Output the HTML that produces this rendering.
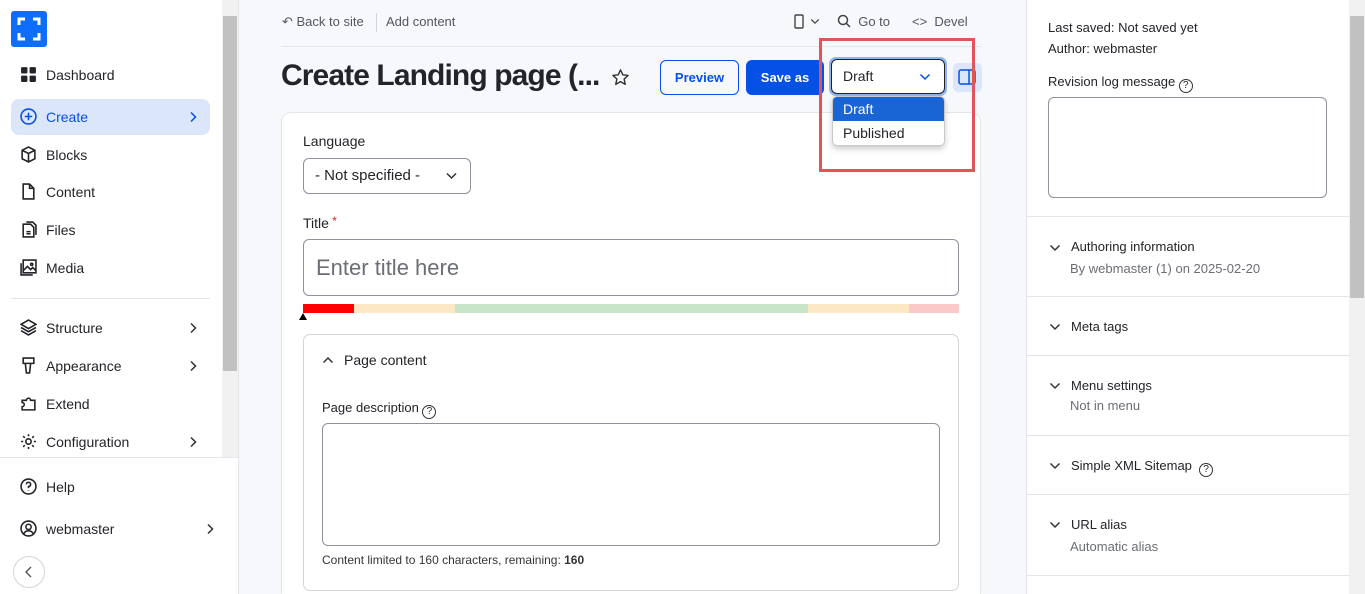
<!DOCTYPE html>
<html><head><meta charset="utf-8"><style>
*{box-sizing:border-box;margin:0;padding:0}
html{width:1365px;height:594px;overflow:hidden}
body{width:1365px;height:594px;overflow:hidden;font-family:"Liberation Sans",sans-serif;color:#232429;background:#f7f8fb;position:relative;font-size:14px}
.abs{position:absolute}
#side{left:0;top:0;width:238px;height:594px;background:#fff}
.sb{background:#f1f1f1}
.thumb{background:#c1c1c1}
.nav{position:absolute;left:20px;font-size:14px;display:flex;align-items:center;gap:9px;color:#232429}
.nav svg{width:17px;height:17px}
.chev{position:absolute;width:10px;height:12px}
#right{left:1026px;top:0;width:323px;height:594px;background:#fff;border-left:1px solid #e3e5ea}
.sec{position:absolute;left:0;width:323px;border-top:1px solid #e3e5ea}
.sec b{font-weight:normal;position:absolute;left:44px;font-size:13px;color:#232429}
.sec i{font-style:normal;position:absolute;left:43px;font-size:13px;color:#6b6e75}
.sec .cv{position:absolute;left:22px;width:12px;height:8px}
.q{display:inline-block;width:14px;height:14px;border:1.3px solid #333;border-radius:50%;font-size:10px;text-align:center;line-height:12px;vertical-align:-2px}
</style></head><body>
<svg width="0" height="0" style="position:absolute"><defs>
<symbol id="r" viewBox="0 0 10 12"><path d="M3 1.5l4.5 4.5L3 10.5" fill="none" stroke="currentColor" stroke-width="1.5"/></symbol>
<symbol id="d" viewBox="0 0 12 8"><path d="M1.5 1.5L6 6l4.5-4.5" fill="none" stroke="currentColor" stroke-width="1.5"/></symbol>
</defs></svg>
<div id="side" class="abs">
 <div class="abs" style="left:11px;top:11px;width:36px;height:36px;background:#0d6efd;border-radius:3px">
  <svg width="36" height="36" viewBox="0 0 36 36" fill="none" stroke="#fff" stroke-width="3"><path d="M8 14V8h6M22 8h6v6M28 22v6h-6M14 28H8v-6"/></svg>
 </div>
 <div class="nav" style="top:66px"><svg viewBox="0 0 16 16"><rect x="1" y="1" width="6" height="6" rx="1" fill="#232429"/><rect x="9" y="1" width="6" height="6" rx="1" fill="#232429"/><rect x="1" y="9" width="6" height="6" rx="1" fill="#232429"/><rect x="9" y="9" width="6" height="6" rx="1" fill="#232429"/></svg>Dashboard</div>
 <div class="abs" style="left:11px;top:99px;width:199px;height:36px;background:#dbe6fb;border-radius:8px"></div>
 <div class="nav" style="top:108px;color:#0550e6"><svg viewBox="0 0 16 16" fill="none" stroke="#0550e6" stroke-width="1.5"><circle cx="8" cy="8" r="7"/><path d="M8 4.5v7M4.5 8h7"/></svg>Create</div>
 <svg class="chev" style="left:188px;top:111px;color:#0550e6"><use href="#r"/></svg>
 <div class="nav" style="top:146px"><svg viewBox="0 0 16 16" fill="none" stroke="#232429" stroke-width="1.5"><path d="M8 1l6 3v8l-6 3-6-3V4zM2 4l6 3 6-3M8 7v8"/></svg>Blocks</div>
 <div class="nav" style="top:183px"><svg viewBox="0 0 16 16" fill="none" stroke="#232429" stroke-width="1.5"><path d="M3 1h6l4 4v10H3zM9 1v4h4"/></svg>Content</div>
 <div class="nav" style="top:221px"><svg viewBox="0 0 16 16" fill="none" stroke="#232429" stroke-width="1.5"><path d="M3 3h7l3 3v9H3zM6 1h6l3 3v9M6 10h4M6 12h4"/></svg>Files</div>
 <div class="nav" style="top:259px"><svg viewBox="0 0 16 16" fill="none" stroke="#232429" stroke-width="1.5"><rect x="3" y="1" width="12" height="12"/><path d="M1 4v11h11M3 11l4-4 3 3 2-2 3 3"/><circle cx="11" cy="5" r="1"/></svg>Media</div>
 <div class="abs" style="left:11px;top:298px;width:199px;height:1px;background:#e3e5ea"></div>
 <div class="nav" style="top:319px"><svg viewBox="0 0 16 16" fill="none" stroke="#232429" stroke-width="1.5"><path d="M8 1l7 4-7 4-7-4zM1 8l7 4 7-4M1 11l7 4 7-4"/></svg>Structure</div>
 <svg class="chev" style="left:188px;top:322px;color:#333"><use href="#r"/></svg>
 <div class="nav" style="top:357px"><svg viewBox="0 0 16 16" fill="none" stroke="#232429" stroke-width="1.5"><path d="M3 1h10v5H3zM5 6l1 9h3l1-9"/></svg>Appearance</div>
 <svg class="chev" style="left:188px;top:360px;color:#333"><use href="#r"/></svg>
 <div class="nav" style="top:395px"><svg viewBox="0 0 16 16" fill="none" stroke="#232429" stroke-width="1.5"><path d="M2 5h4a2 2 0 1 1 4 0h4v9H2v-3a2 2 0 1 0 0-4z"/></svg>Extend</div>
 <div class="nav" style="top:433px"><svg viewBox="0 0 16 16" fill="none" stroke="#232429" stroke-width="1.5"><circle cx="8" cy="8" r="2.5"/><path d="M8 1v2M8 13v2M1 8h2M13 8h2M3 3l1.5 1.5M11.5 11.5L13 13M3 13l1.5-1.5M11.5 4.5L13 3"/></svg>Configuration</div>
 <svg class="chev" style="left:188px;top:436px;color:#333"><use href="#r"/></svg>
 <div class="abs" style="left:0;top:457px;width:238px;height:1px;background:#e3e5ea"></div>
 <div class="nav" style="top:478px"><svg viewBox="0 0 16 16" fill="none" stroke="#232429" stroke-width="1.5"><circle cx="8" cy="8" r="7"/><path d="M6 6a2 2 0 1 1 2 2v1.5M8 11.5v.5"/></svg>Help</div>
 <div class="nav" style="top:520px"><svg viewBox="0 0 16 16" fill="none" stroke="#232429" stroke-width="1.5"><circle cx="8" cy="8" r="7"/><circle cx="8" cy="6.5" r="2.5"/><path d="M3.5 13a5 5 0 0 1 9 0"/></svg>webmaster</div>
 <svg class="chev" style="left:205px;top:523px;color:#333"><use href="#r"/></svg>
 <div class="abs" style="left:13px;top:556px;width:32px;height:32px;border:1px solid #d3d4d9;border-radius:50%"><svg width="30" height="30" viewBox="0 0 30 30"><path d="M17 10l-5 5 5 5" fill="none" stroke="#555" stroke-width="1.4"/></svg></div>
</div>
<div class="abs sb" style="left:222px;top:0;width:16px;height:457px"></div>
<div class="abs thumb" style="left:223px;top:16px;width:14px;height:355px"></div>
<div class="abs" style="left:238px;top:0;width:1px;height:594px;background:#e3e5ea"></div>

<div class="abs" style="left:282px;top:14px;font-size:13px;color:#55565b">&#x21B6; Back to site</div>
<div class="abs" style="left:376px;top:13px;width:1px;height:19px;background:#d3d4d9"></div>
<div class="abs" style="left:386px;top:14px;font-size:13px;color:#55565b">Add content</div>
<div class="abs" style="left:794px;top:14px">
 <svg width="10" height="15" viewBox="0 0 10 15"><rect x="1" y="1" width="8" height="13" rx="1" fill="none" stroke="#444" stroke-width="1.4"/></svg>
 <svg width="10" height="7" style="color:#444;margin-left:2px;vertical-align:4px"><use href="#d"/></svg>
</div>
<div class="abs" style="left:837px;top:14px;font-size:13px;color:#55565b"><svg width="14" height="14" viewBox="0 0 14 14" fill="none" stroke="#444" stroke-width="1.5" style="vertical-align:-2px"><circle cx="6" cy="6" r="4.5"/><path d="M9.5 9.5L13 13"/></svg> &nbsp;Go to</div>
<div class="abs" style="left:912px;top:14px;font-size:13px;color:#55565b">&lt;&gt; &nbsp;Devel</div>
<div class="abs" style="left:281px;top:46px;width:700px;height:1px;background:#e3e5ea"></div>

<div class="abs" style="left:281px;top:59px;font-size:30px;font-weight:bold;letter-spacing:-0.9px;color:#232429;white-space:nowrap">Create Landing page (...</div>
<svg class="abs" style="left:611px;top:68px" width="19" height="19" viewBox="0 0 20 20"><path d="M10 2l2.4 5.2 5.6.6-4.2 3.8 1.2 5.6L10 14.4 5 17.2l1.2-5.6L2 7.8l5.6-.6z" fill="none" stroke="#333" stroke-width="1.5" stroke-linejoin="round"/></svg>
<div class="abs" style="left:660px;top:60px;width:79px;height:35px;border:1px solid #0550e6;border-radius:6px;color:#0550e6;font-weight:bold;font-size:13px;text-align:center;line-height:33px">Preview</div>
<div class="abs" style="left:746px;top:60px;width:78px;height:35px;background:#0550e6;border-radius:6px;color:#fff;font-weight:bold;font-size:13px;text-align:center;line-height:35px">Save as</div>
<div class="abs" style="left:953px;top:63px;width:29px;height:29px;background:#dbe6fb;border-radius:5px"><svg width="29" height="29" viewBox="0 0 29 29" fill="none" stroke="#0550e6" stroke-width="1.5"><rect x="6" y="7" width="16" height="14" rx="2"/><path d="M16 7v14"/></svg></div>

<div class="abs" style="left:281px;top:112px;width:700px;height:490px;background:#fff;border:1px solid #e3e5ea;border-radius:10px"></div>
<div class="abs" style="left:303px;top:133px;font-size:14px">Language</div>
<div class="abs" style="left:303px;top:158px;width:168px;height:36px;border:1px solid #8e929c;border-radius:6px;line-height:34px;padding-left:11px;font-size:15px">- Not specified -<svg style="position:absolute;right:12px;top:13px;color:#333" width="13" height="8"><use href="#d"/></svg></div>
<div class="abs" style="left:303px;top:214px;font-size:14px">Title<span style="color:#d72222;vertical-align:3px;font-size:12px"> *</span></div>
<div class="abs" style="left:303px;top:239px;width:656px;height:57px;border:1px solid #8e929c;border-radius:6px;line-height:55px;padding-left:12px;font-size:22px;color:#6b6e75">Enter title here</div>
<div class="abs" style="left:303px;top:304px;height:9px;width:51px;background:#f00"></div>
<div class="abs" style="left:354px;top:304px;height:9px;width:101px;background:#fde8c6"></div>
<div class="abs" style="left:455px;top:304px;height:9px;width:353px;background:#c9e5c9"></div>
<div class="abs" style="left:808px;top:304px;height:9px;width:101px;background:#fde8c6"></div>
<div class="abs" style="left:909px;top:304px;height:9px;width:50px;background:#fcc9c9"></div>
<div class="abs" style="left:299px;top:313px;width:0;height:0;border-left:4px solid transparent;border-right:4px solid transparent;border-bottom:7px solid #000"></div>
<div class="abs" style="left:303px;top:334px;width:656px;height:257px;border:1px solid #d3d4d9;border-radius:7px"></div>
<svg class="abs" style="left:322px;top:356px;color:#333;transform:rotate(180deg)" width="12" height="8"><use href="#d"/></svg>
<div class="abs" style="left:344px;top:352px;font-size:14px">Page content</div>
<div class="abs" style="left:322px;top:400px;font-size:13px">Page description <span class="q">?</span></div>
<div class="abs" style="left:322px;top:423px;width:618px;height:123px;border:1px solid #8e929c;border-radius:6px"></div>
<div class="abs" style="left:322px;top:553px;font-size:12px;color:#33353a">Content limited to 160 characters, remaining: <b>160</b></div>

<div class="abs" style="left:829px;top:57px;width:118px;height:39px;border:3px solid #8bb6f2;border-radius:7px;z-index:5"></div>
<div class="abs" style="left:831px;top:59px;width:114px;height:35px;background:#fff;border:1px solid #222;border-radius:6px;font-size:14px;line-height:33px;padding-left:11px;z-index:6">Draft<svg style="position:absolute;right:13px;top:13px;color:#0550e6" width="12" height="8"><use href="#d"/></svg></div>
<div class="abs" style="left:832px;top:96px;width:113px;height:50px;background:#fff;border:1px solid #c8c9cc;border-radius:5px;box-shadow:0 3px 6px rgba(0,0,0,.2);overflow:hidden;z-index:6">
 <div style="background:#1a65d6;color:#fff;height:24px;line-height:24px;padding-left:10px;font-size:14px">Draft</div>
 <div style="height:25px;line-height:25px;padding-left:10px;font-size:14px">Published</div>
</div>
<div class="abs" style="left:819px;top:38px;width:156px;height:134px;border:3px solid #e05555;z-index:7"></div>

<div id="right" class="abs">
 <div class="abs" style="left:21px;top:20px;font-size:13px">Last saved: Not saved yet</div>
 <div class="abs" style="left:21px;top:41px;font-size:13px">Author: webmaster</div>
 <div class="abs" style="left:21px;top:74px;font-size:13px">Revision log message <span class="q">?</span></div>
 <div class="abs" style="left:21px;top:97px;width:279px;height:101px;border:1px solid #8e929c;border-radius:6px"></div>
 <div class="sec" style="top:216px;height:80px"><svg class="cv" style="top:27px;color:#333"><use href="#d"/></svg><b style="top:22px">Authoring information</b><i style="top:44px">By webmaster (1) on 2025-02-20</i></div>
 <div class="sec" style="top:296px;height:60px"><svg class="cv" style="top:26px;color:#333"><use href="#d"/></svg><b style="top:22px">Meta tags</b></div>
 <div class="sec" style="top:355px;height:80px"><svg class="cv" style="top:26px;color:#333"><use href="#d"/></svg><b style="top:22px">Menu settings</b><i style="top:42px">Not in menu</i></div>
 <div class="sec" style="top:435px;height:60px"><svg class="cv" style="top:26px;color:#333"><use href="#d"/></svg><b style="top:22px">Simple XML Sitemap &nbsp;<span class="q">?</span></b></div>
 <div class="sec" style="top:494px;height:82px"><svg class="cv" style="top:26px;color:#333"><use href="#d"/></svg><b style="top:22px">URL alias</b><i style="top:44px">Automatic alias</i></div>
 <div class="sec" style="top:575px;height:19px"></div>
</div>
<div class="abs sb" style="left:1349px;top:0;width:16px;height:594px"></div>
<div class="abs thumb" style="left:1350px;top:16px;width:14px;height:282px"></div>
</body></html>
